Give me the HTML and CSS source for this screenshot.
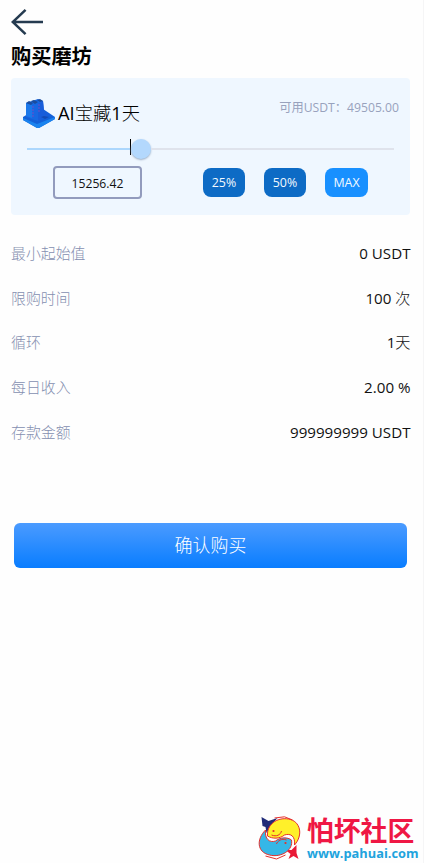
FILE: index.html
```html
<!DOCTYPE html>
<html lang="zh-CN">
<head>
<meta charset="utf-8">
<title>购买磨坊</title>
<link rel="stylesheet" href="styles.css">
</head>
<body>
<main class="page">
  <header class="header">
    <svg class="back" viewBox="0 0 34 28"><path d="M33 14H2M15 1.5L1.8 14 15 26.5" fill="none" stroke="#253b50" stroke-width="2.6"/></svg>
    <h1 class="title">购买磨坊</h1>
  </header>
  <section class="card">
    <div class="card-head">
      <svg class="machine" viewBox="0 0 32 30">
        <path d="M0 18L5 15 20 10 32 18V20L16 29H14L0 21Z" fill="#1260d8"/>
        <path d="M0 19L14 25 32 18V20L16 29H14L0 21Z" fill="#1a83ee"/>
        <path d="M3 4L15 0 20 2 21 12 27 16 15 22 3 18Z" fill="#1767e2"/>
        <path d="M3 4L9 6V19L3 17Z" fill="#1a78ea"/>
        <path d="M15 5L20 2 21 12 27 16 15 22Z" fill="#185dda"/>
        <path d="M3 4L6 2 10 4 8 6ZM8 2L11 1 15 3 12 5ZM14 1L17 0 20 2 17 3Z" fill="#1b4c9d"/>
        <path d="M10 7V19M16 5V13" fill="none" stroke="#6253cc" stroke-width="1.2" stroke-dasharray="2 1"/>
        <path d="M21 17L26 18 22 20 18 18Z" fill="#134bb4"/>
      </svg>
      <span class="name"><span class="latin">AI</span>宝藏<span class="latin">1</span>天</span>
      <span class="available">可用USDT：49505.00</span>
    </div>
    <div class="slider"><span class="fill"></span><span class="cursor"></span><span class="thumb"></span><span class="rest"></span></div>
    <div class="controls">
      <div class="amount">15256.42</div>
      <div class="quick"><span class="chip">25%</span><span class="chip">50%</span><span class="chip max">MAX</span></div>
    </div>
  </section>
  <dl class="details">
    <div class="row"><dt>最小起始值</dt><dd>0 USDT</dd></div>
    <div class="row"><dt>限购时间</dt><dd>100 <span class="cjk">次</span></dd></div>
    <div class="row"><dt>循环</dt><dd>1<span class="cjk">天</span></dd></div>
    <div class="row"><dt>每日收入</dt><dd>2.00 %</dd></div>
    <div class="row"><dt>存款金额</dt><dd>999999999 USDT</dd></div>
  </dl>
  <div class="confirm">确认购买</div>
</main>
<aside class="watermark">
  <svg class="fish" viewBox="0 0 44 44">
    <path d="M5 10L4 1 11 5 20 2 14 9 9 17 8 11Z" fill="#202b78"/>
    <path d="M39 29L34 34 28 34 33 38 31 43 36 40 41 43 39 37Z" fill="#e91936"/>
    <path d="M10 20C9 9 19 1 31 3 43 5 46 19 37 29 38 20 33 17 27 19 22 23 15 23 10 20Z" fill="#fff02a" stroke="#e52f2c" stroke-width="1"/>
    <path d="M34 24C36 34 24 42 12 39-1 36-1 23 8 14 7 23 12 27 18 25 23 21 30 21 34 24Z" fill="#35b7e7" stroke="#e52f2c" stroke-width="1"/>
    <path d="M14 19C19 21 23 19 24 15M29 24C24 22 20 25 19 28M17 2L27 .8 35 4M8 40L19 43 28 39" fill="none" stroke="#e52f2c"/>
    <circle cx="16" cy="15" r="1.1" fill="#e52f2c"/><circle cx="28" cy="27" r="1.1" fill="#e52f2c"/>
  </svg>
  <div class="brand"><div class="brand-name">怕坏社区</div><div class="brand-url">www.pahuai.com</div></div>
</aside>
</body>
</html>
```
FILE: styles.css
```css
* { box-sizing: border-box; }
body { margin: 0; background: #fefefe; font-family: "Open Sans", "Noto Sans CJK SC", sans-serif; color: #111; }
.page { height: 863px; padding: 8px 13px 0 11px; border-right: 1px solid #f5f5f6; }
.header { height: 70px; }
.back { display: block; width: 33px; height: 28px; }
.title { margin: 5px 0 0; font-size: 20.2px; line-height: 30px; font-weight: 700; color: #000; }
.card { width: 399px; height: 137px; background: #eff7ff; border-radius: 4px; padding: 16px 11px 0 12px; }
.card-head { display: flex; height: 40px; align-items: center; }
.machine { width: 32px; height: 30px; margin-top: -1px; }
.name { margin: -2px 0 0 3px; font-size: 18.3px; line-height: 40px; font-weight: 300; white-space: nowrap; color: #000; }
.latin { font-weight: 400; }
.available { margin: -13px 0 0 auto; font-size: 12.2px; line-height: 18px; color: #98a2bd; white-space: nowrap; }
.slider { display: flex; align-items: center; height: 22px; margin: 4px 5px 0 4px; }
.fill { width: 103px; height: 2px; background: #acd7fd; }
.cursor { width: 1px; height: 16px; margin-top: -4px; background: #000; }
.thumb { width: 20px; height: 20px; border-radius: 50%; background: #b3d8fd; box-shadow: 0 1px 2px #9caec5; }
.rest { flex: 1; height: 2px; background: #dfe3ec; }
.controls { display: flex; margin: 6px 0 0 30px; }
.amount { width: 89px; height: 33px; border: 2px solid #929bbd; border-radius: 4px; font-size: 12.2px; line-height: 31px; text-align: center; }
.quick { display: flex; gap: 19px; margin: 2px 0 0 61px; }
.chip { width: 42px; height: 29px; border-radius: 8px; background: #0d6bc5; color: #f3faff; font-size: 12.4px; line-height: 29px; text-align: center; }
.max { width: 43px; background: #1890ff; font-weight: 500; }
.details { margin: 16px 0 0; width: 399.5px; font-size: 14.9px; }
.row { display: flex; justify-content: space-between; height: 44.7px; line-height: 44px; }
dt { color: #858fb0; font-weight: 300; }
dd { margin: 0; font-size: 15.15px; }
.cjk { font-weight: 300; }
.confirm { width: 393px; height: 45px; margin: 68.5px 0 0 3px; border-radius: 6px; background: linear-gradient(#4b9bff, #097dff); color: #fff; font-size: 18px; font-weight: 300; line-height: 45px; text-align: center; }
.watermark { position: absolute; left: 257px; top: 816px; display: flex; }
.fish { width: 45px; height: 44px; }
.brand { margin-left: 5px; white-space: nowrap; }
.brand-name { height: 30px; font-size: 26.8px; line-height: 30px; font-weight: 700; color: #ef1744; }
.brand-url { font-size: 12.8px; line-height: 14px; font-weight: 700; color: #21a3dd; }
```
